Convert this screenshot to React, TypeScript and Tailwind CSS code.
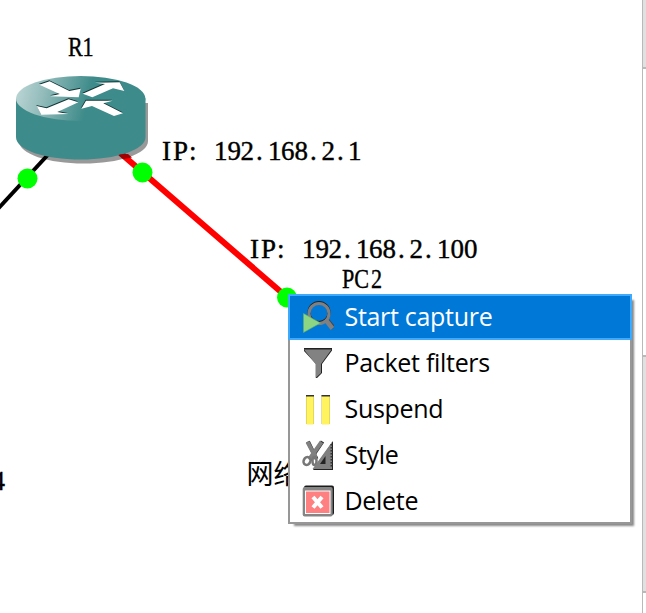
import React from "react";

type LabelProps = { x: number | string; y: number; text: string };

function Label({ x, y, text }: LabelProps) {
  return (
    <text
      x={x}
      y={y}
      className="fill-black stroke-black stroke-[0.4px] font-['Liberation_Serif','Noto_Sans_CJK_SC',serif] text-[27px]"
    >
      {text}
    </text>
  );
}

function Router() {
  return (
    <g>
      <path d="M19 103 V141 C19 154 48 163.500 83.500 163.500 C119 163.500 148 154 148 141 V103Z" fill="#000" fillOpacity=".4" />
      <path d="M16 98.500 V137 C16 150 45 159.500 80.500 159.500 C116 159.500 145.500 150 145.500 137 V98.500Z" fill="#3d8b8a" />
      <ellipse cx="80.700" cy="98.500" rx="64.700" ry="22.500" fill="url(#lid)" />
      <g transform="translate(0 20) scale(.33333)">
        <g fill="#123434" transform="translate(-1 -3)">
          <path d="M118 194L149 184L208 213L242 206L236 232L151 229L179 222Z" />
          <path d="M248 221L315 192L285 188L359 187L373 213L339 205L277 232Z" />
          <path d="M110 258L140 265L206 238L235 247L172 276L205 282L124 284Z" />
          <path d="M244 266L258 242L338 242L310 250L369 280L342 288L276 258Z" />
        </g>
        <g fill="#fff">
          <path d="M118 194L149 184L208 213L242 206L236 232L151 229L179 222Z" />
          <path d="M248 221L315 192L285 188L359 187L373 213L339 205L277 232Z" />
          <path d="M110 258L140 265L206 238L235 247L172 276L205 282L124 284Z" />
          <path d="M244 266L258 242L338 242L310 250L369 280L342 288L276 258Z" />
        </g>
      </g>
    </g>
  );
}

function Topology() {
  return (
    <svg className="block h-[613px] w-[642px]" viewBox="0 0 642 613">
      <defs>
        <linearGradient id="lid" gradientUnits="userSpaceOnUse" x1="18" y1="92" x2="86" y2="108">
          <stop offset="0" stopColor="#b7d3d2" />
          <stop offset=".35" stopColor="#93bcbb" />
          <stop offset="1" stopColor="#3d8b8a" />
        </linearGradient>
      </defs>
      <path d="M81 119L-4 211" stroke="#000" strokeWidth="4" />
      <path d="M81 119L288 298" stroke="#f00" strokeWidth="6" />
      <Router />
      <path d="M119 154.500L128 154L132 157.500L124 159Z" fill="#a00000" />
      <g fill="#0f0">
        <circle cx="27.500" cy="178.500" r="10" />
        <circle cx="142.500" cy="172.500" r="10" />
        <circle cx="287" cy="297.500" r="10" />
      </g>
      <g transform="scale(.82 1)">
        <Label x="82.900 100.500" y={56} text="R1" />
        <Label x="417 432 452.500" y={288} text="PC2" />
      </g>
      <Label x="162 173 189 202 214 227.500 240.500 256 268 281 294.500 310 321.500 337 348" y={160} text="IP: 192.168.2.1" />
      <Label x="250 261 277 290 302 315.500 328.500 344 356 369 382.500 398 409.500 425 437 450.500 464" y={258} text="IP: 192.168.2.100" />
      <Label x={-8.500} y={490} text="4" />
      <text x="246.500" y="483.500" className="fill-black font-['Noto_Sans_CJK_SC',sans-serif] text-[27px]">
        网络
      </text>
    </svg>
  );
}

function CaptureIcon() {
  return (
    <svg className="size-8" viewBox="0 0 32 32" fill="none">
      <circle cx="17" cy="11.500" r="10" stroke="#222" strokeWidth="3" />
      <path d="M24 18L31.500 27" stroke="#444" strokeWidth="4.500" />
      <circle cx="17" cy="12.500" r="10" stroke="#808080" strokeWidth="3" />
      <path d="M23.500 18.500L30.500 27.500" stroke="#808080" strokeWidth="4.500" />
      <path d="M1.500 12.500V31.500L18.500 22Z" fill="#8bd585" stroke="#65ad68" strokeWidth=".6" />
    </svg>
  );
}

function FilterIcon() {
  return (
    <svg className="size-8" viewBox="0 0 32 32">
      <path d="M2 1H30V3.500L20 17V26L15 31H14V17L2 4Z" fill="#222" />
      <path d="M2 2.500H29.500L19 17V26L13.500 31V17Z" fill="#828282" />
    </svg>
  );
}

function PauseIcon() {
  return (
    <svg className="size-8" viewBox="0 0 32 32">
      <path d="M4 2H12V31H4ZM19.500 2H28V31H19.500Z" fill="#c8bd55" />
      <path d="M4.500 3H11.500V31.500H4.500ZM20 3H27.500V31.500H20Z" fill="#fff45f" />
      <path d="M4 2H12V3.500H4ZM19.500 2H28V3.500H19.500Z" fill="#333" />
    </svg>
  );
}

function StyleIcon() {
  return (
    <svg className="size-8" viewBox="0 0 32 32" fill="none">
      <path d="M6 2.500L14.500 20M20.500 2.500L8 21" stroke="#333" strokeWidth="4" />
      <path d="M5.500 3L14 19M19.500 3L7.500 20" stroke="#808080" strokeWidth="4" />
      <ellipse cx="5" cy="22" rx="3.300" ry="4" transform="rotate(25 5 22)" stroke="#777" strokeWidth="2.500" />
      <ellipse cx="12.500" cy="22" rx="2" ry="4" stroke="#777" strokeWidth="2.500" />
      <path d="M31 2V31H11Z" fill="#222" />
      <path d="M30 3V30H10.500ZM23.500 17L18 25H23.500Z" fill="#808080" fillRule="evenodd" />
      <path d="M29.500 5V29" stroke="#333" strokeWidth="2" strokeDasharray="1.500 1.500" />
    </svg>
  );
}

function DeleteIcon() {
  return (
    <svg className="size-8" viewBox="0 0 32 32">
      <rect x="2" y=".5" width="30" height="29.500" rx="2" fill="#1b1b1b" />
      <rect x=".7" y="2" width="30" height="29.500" rx="2" fill="#858585" />
      <rect x="3" y="5.500" width="25.500" height="23.500" fill="#fff" />
      <rect x="4" y="6.500" width="23.500" height="21.500" fill="#ff8080" />
      <path d="M11 12L20 22.500M20 12L11 22.500" stroke="#fff" strokeWidth="4" />
    </svg>
  );
}

const items = [
  { label: "Start capture", Icon: CaptureIcon, active: true },
  { label: "Packet filters", Icon: FilterIcon, active: false },
  { label: "Suspend", Icon: PauseIcon, active: false },
  { label: "Style", Icon: StyleIcon, active: false },
  { label: "Delete", Icon: DeleteIcon, active: false },
];

function ContextMenu() {
  return (
    <ul className="absolute top-[294px] left-[288px] flex h-[230px] w-[344px] flex-col bg-white font-['Open_Sans','Noto_Sans',sans-serif] text-[25px] tracking-[-0.3px] shadow-[inset_0_0_0_2px_#979797,4px_4px_2px_-2px_#888]">
      {items.map(({ label, Icon, active }) => (
        <li
          key={label}
          className={
            active
              ? "flex h-[46px] items-center gap-[10.5px] border-2 border-[#3fa9fb] bg-[#0078d7] pl-3 text-white"
              : "flex h-[46px] items-center gap-[10.5px] pl-[14px] text-black"
          }
        >
          <Icon />
          <span className="pb-0.5 leading-8 whitespace-nowrap">{label}</span>
        </li>
      ))}
    </ul>
  );
}

function Docks() {
  return (
    <div className="flex h-full w-1 flex-col border-l border-[#b9b9b9]">
      <div className="h-[69px] border-b-2 border-[#b9b9b9] bg-[#e1e1e1]" />
      <div className="h-[286px]" />
      <div className="h-[238px] border-y-2 border-[#b9b9b9] bg-[#e1e1e1]" />
    </div>
  );
}

export default function App() {
  return (
    <main className="relative flex h-[613px] w-[646px] overflow-hidden bg-white">
      <Topology />
      <Docks />
      <ContextMenu />
    </main>
  );
}
